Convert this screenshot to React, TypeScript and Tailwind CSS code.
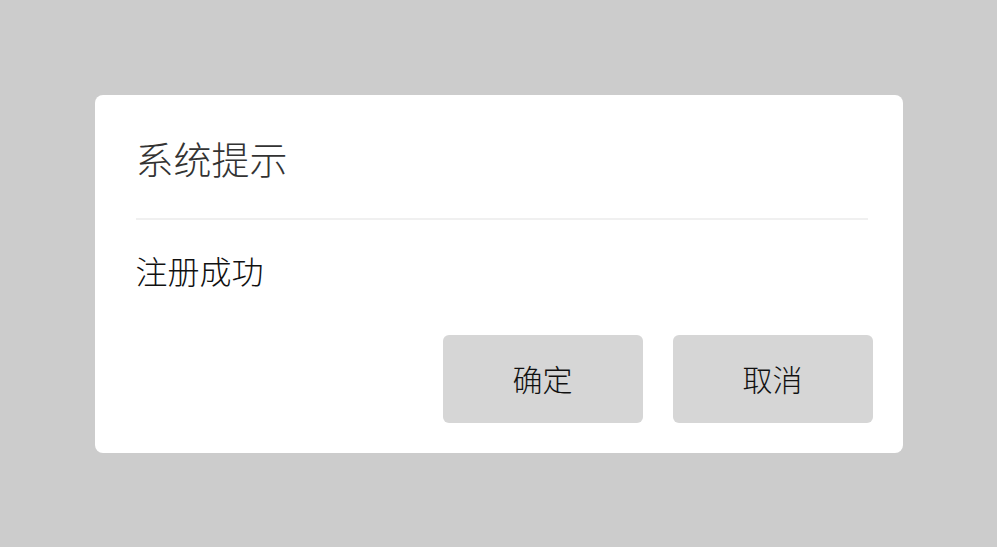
export default function App() {
  return (
    <div
      className="w-[997px] h-[547px] bg-[#cccccc] flex items-center justify-center"
      style={{ fontFamily: '"Noto Sans CJK SC", "Noto Sans", sans-serif' }}
    >
      <div className="w-[808px] h-[358px] bg-white rounded-[8px] flex flex-col">
        {/* 标题 */}
        <div className="pt-[36px] pl-[41px] text-[38px] leading-[54px] font-light text-[#333333]">系统提示</div>
        <div className="mt-[33px] ml-[41px] mr-[35px] h-[2px] bg-[#f0f0f0]" />
        {/* 内容 */}
        <div className="mt-[26px] pl-[41px] text-[32px] leading-[48px] font-light text-[#111111]">注册成功</div>
        <div className="mt-auto flex justify-end gap-[30px] pr-[30px] pb-[30px]">
          <button className="w-[200px] h-[88px] rounded-[6px] bg-[#d6d6d6] text-[30px] font-light text-[#111111]">
            确定
          </button>
          <button className="w-[200px] h-[88px] rounded-[6px] bg-[#d6d6d6] text-[30px] font-light text-[#111111]">
            取消
          </button>
        </div>
      </div>
    </div>
  );
}
